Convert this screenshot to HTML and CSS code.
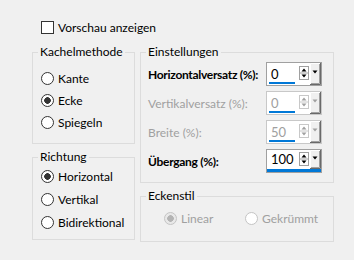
FILE: index.html
```html
<!DOCTYPE html>
<html lang="de">
<head>
  <meta charset="UTF-8" />
  <title>Nahtloses Kacheln</title>
  <link rel="stylesheet" href="styles.css">
</head>
<body>
<div class="preview"><span class="check"></span>Vorschau anzeigen</div>

<div class="main">
  <div class="col col-left">
    <fieldset class="group group-tile">
      <legend>Kachelmethode</legend>
      <div class="opt"><span class="radio"></span>Kante</div>
      <div class="opt"><span class="radio on"></span>Ecke</div>
      <div class="opt"><span class="radio"></span>Spiegeln</div>
    </fieldset>
    <fieldset class="group group-dir">
      <legend>Richtung</legend>
      <div class="opt"><span class="radio on"></span>Horizontal</div>
      <div class="opt"><span class="radio"></span>Vertikal</div>
      <div class="opt"><span class="radio"></span>Bidirektional</div>
    </fieldset>
  </div>

  <div class="col col-right">
    <fieldset class="group group-settings">
      <legend>Einstellungen</legend>
      <div class="rows">
        <div class="field-row">
          <span class="lbl strong">Horizontalversatz (%):</span>
          <div class="spin">
            <div class="spin-main">
              <div class="val"><span class="num">0</span><span class="bar"></span></div>
              <svg class="arrows" width="22" height="22" viewBox="0 0 22 22">
                <rect x="0.5" y="3.5" width="9" height="13" fill="#fff" stroke="#a0a0a0"/>
                <path d="M1 10H9" stroke="#a0a0a0"/>
                <path d="M2.5 8.5h5L5 5.5z" fill="#000"/>
                <path d="M2.5 11.5h5L5 14.5z" fill="#000"/>
                <rect x="11" y="0" width="10" height="21" fill="#f0f0f0"/>
                <path d="M11.5 21V0.5H21" stroke="#fff" fill="none"/>
                <path d="M12 20.5H20.5V1" stroke="#a0a0a0" fill="none"/>
                <path d="M11 21.5H21.5V0" stroke="#696969" fill="none"/>
                <path d="M13.5 7.5h5L16 10.5z" fill="#000"/>
              </svg>
            </div>
          </div>
        </div>
        <div class="field-row">
          <span class="lbl dis">Vertikalversatz (%):</span>
          <div class="spin off">
            <div class="spin-main">
              <div class="val"><span class="num">0</span><span class="bar"></span></div>
              <svg class="arrows" width="22" height="22" viewBox="0 0 22 22">
                <rect x="0.5" y="3.5" width="9" height="13" fill="#fff" stroke="#c8c8c8"/>
                <path d="M1 10H9" stroke="#c8c8c8"/>
                <path d="M2.5 8.5h5L5 5.5z" fill="#a0a0a0"/>
                <path d="M2.5 11.5h5L5 14.5z" fill="#a0a0a0"/>
                <rect x="11" y="0" width="10" height="21" fill="#f0f0f0"/>
                <path d="M11.5 21V0.5H21" stroke="#fff" fill="none"/>
                <path d="M12 20.5H20.5V1" stroke="#a0a0a0" fill="none"/>
                <path d="M11 21.5H21.5V0" stroke="#696969" fill="none"/>
                <path d="M13.5 7.5h5L16 10.5z" fill="#a0a0a0"/>
              </svg>
            </div>
          </div>
        </div>
        <div class="field-row">
          <span class="lbl dis">Breite (%):</span>
          <div class="spin off">
            <div class="spin-main">
              <div class="val"><span class="num">50</span><span class="bar"></span></div>
              <svg class="arrows" width="22" height="22" viewBox="0 0 22 22">
                <rect x="0.5" y="3.5" width="9" height="13" fill="#fff" stroke="#c8c8c8"/>
                <path d="M1 10H9" stroke="#c8c8c8"/>
                <path d="M2.5 8.5h5L5 5.5z" fill="#a0a0a0"/>
                <path d="M2.5 11.5h5L5 14.5z" fill="#a0a0a0"/>
                <rect x="11" y="0" width="10" height="21" fill="#f0f0f0"/>
                <path d="M11.5 21V0.5H21" stroke="#fff" fill="none"/>
                <path d="M12 20.5H20.5V1" stroke="#a0a0a0" fill="none"/>
                <path d="M11 21.5H21.5V0" stroke="#696969" fill="none"/>
                <path d="M13.5 7.5h5L16 10.5z" fill="#a0a0a0"/>
              </svg>
            </div>
          </div>
        </div>
        <div class="field-row">
          <span class="lbl strong">Übergang (%):</span>
          <div class="spin focus">
            <div class="spin-main">
              <div class="val"><span class="num">100</span></div>
              <svg class="arrows" width="22" height="19" viewBox="0 0 22 19">
                <rect x="0.5" y="2.5" width="9" height="13" fill="#fff" stroke="#a0a0a0"/>
                <path d="M1 9H9" stroke="#a0a0a0"/>
                <path d="M2.5 7.5h5L5 4.5z" fill="#000"/>
                <path d="M2.5 10.5h5L5 13.5z" fill="#000"/>
                <rect x="11" y="0" width="10" height="18" fill="#f0f0f0"/>
                <path d="M11.5 18V0.5H21" stroke="#fff" fill="none"/>
                <path d="M12 17.5H20.5V1" stroke="#a0a0a0" fill="none"/>
                <path d="M11 18.5H21.5V0" stroke="#696969" fill="none"/>
                <path d="M13.5 6.5h5L16 9.5z" fill="#000"/>
              </svg>
            </div>
            <div class="spin-line"></div>
          </div>
        </div>
      </div>
    </fieldset>
    <fieldset class="group group-corner">
      <legend>Eckenstil</legend>
      <div class="corner-row">
        <div class="opt dis"><span class="radio off on"></span>Linear</div>
        <div class="opt dis"><span class="radio off"></span>Gekrümmt</div>
      </div>
    </fieldset>
  </div>
</div>
</body>
</html>
```

FILE: styles.css
```css
body {
  margin: 0;
  background: #f0f0f0;
  font-family: Lato, "Noto Sans", sans-serif;
  font-size: 12px;
  color: #000;
}
.preview {
  display: flex;
  align-items: center;
  gap: 4px;
  height: 17px;
  margin: 19px 0 8px 41px;
}
.check {
  width: 13px;
  height: 13px;
  box-sizing: border-box;
  border: 1px solid #333;
  background: #fff;
}
.main {
  display: flex;
  gap: 5px;
  padding-left: 32px;
}
.col {
  display: flex;
  flex-direction: column;
  gap: 5px;
}
.col-left {
  width: 103px;
}
.col-right {
  width: 194px;
}
.group {
  margin: 0;
  min-width: 0;
  border: 1px solid #dcdcdc;
  padding: 0 8px;
}
.group legend {
  padding: 0 2px;
  margin-left: -3px;
  line-height: 16px;
}
.group-tile {
  padding-top: 7px;
  padding-bottom: 10px;
}
.group-dir {
  padding-top: 0;
  padding-bottom: 5px;
}
.group-dir .opt {
  height: 23px;
}
.group-settings {
  padding: 2px 11px 9px 7px;
}
.group-settings legend,
.group-corner legend {
  margin-left: -2px;
}
.group-corner {
  padding: 3px 7px 12px 7px;
}
.opt {
  display: flex;
  align-items: center;
  gap: 4px;
  height: 22px;
  white-space: nowrap;
}
.radio {
  flex: none;
  width: 13px;
  height: 13px;
  box-sizing: border-box;
  border: 1px solid #333;
  border-radius: 50%;
  background: #fff;
}
.radio.on {
  background: radial-gradient(circle, #333 0 3px, #fff 3.6px);
}
.radio.off {
  border-color: #c4c4c4;
}
.radio.off.on {
  background: radial-gradient(circle, #b4b4b4 0 3px, #e8e8e8 3.6px);
}
.dis,
.lbl.dis {
  color: #a0a0a0;
}
.rows {
  display: flex;
  flex-direction: column;
  gap: 5px;
}
.field-row {
  display: flex;
  align-items: center;
  justify-content: space-between;
  height: 24px;
}
.lbl {
  white-space: nowrap;
}
.lbl.strong {
  font-weight: 700;
  letter-spacing: -0.3px;
}
.spin {
  display: flex;
  flex-direction: column;
  width: 56px;
  height: 24px;
  box-sizing: border-box;
  border: 1px solid #a0a0a0;
  background: #fff;
}
.spin.off {
  border-color: #c8c8c8;
  color: #a0a0a0;
}
.spin-main {
  display: flex;
  flex: 1;
}
.val {
  flex: 1;
  display: flex;
  flex-direction: column;
  padding-left: 4px;
  font-size: 13px;
}
.num {
  line-height: 16px;
  margin-top: 3px;
}
.bar {
  width: 26px;
  height: 2px;
  margin-left: -2px;
  background: #0078d7;
}
.arrows {
  display: block;
  flex: none;
}
.spin.focus .num {
  margin-top: 1px;
}
.spin-line {
  height: 3px;
  background: #0078d7;
}
.corner-row {
  display: flex;
  padding-left: 16px;
}
.corner-row .opt:first-child {
  width: 81px;
}
```
